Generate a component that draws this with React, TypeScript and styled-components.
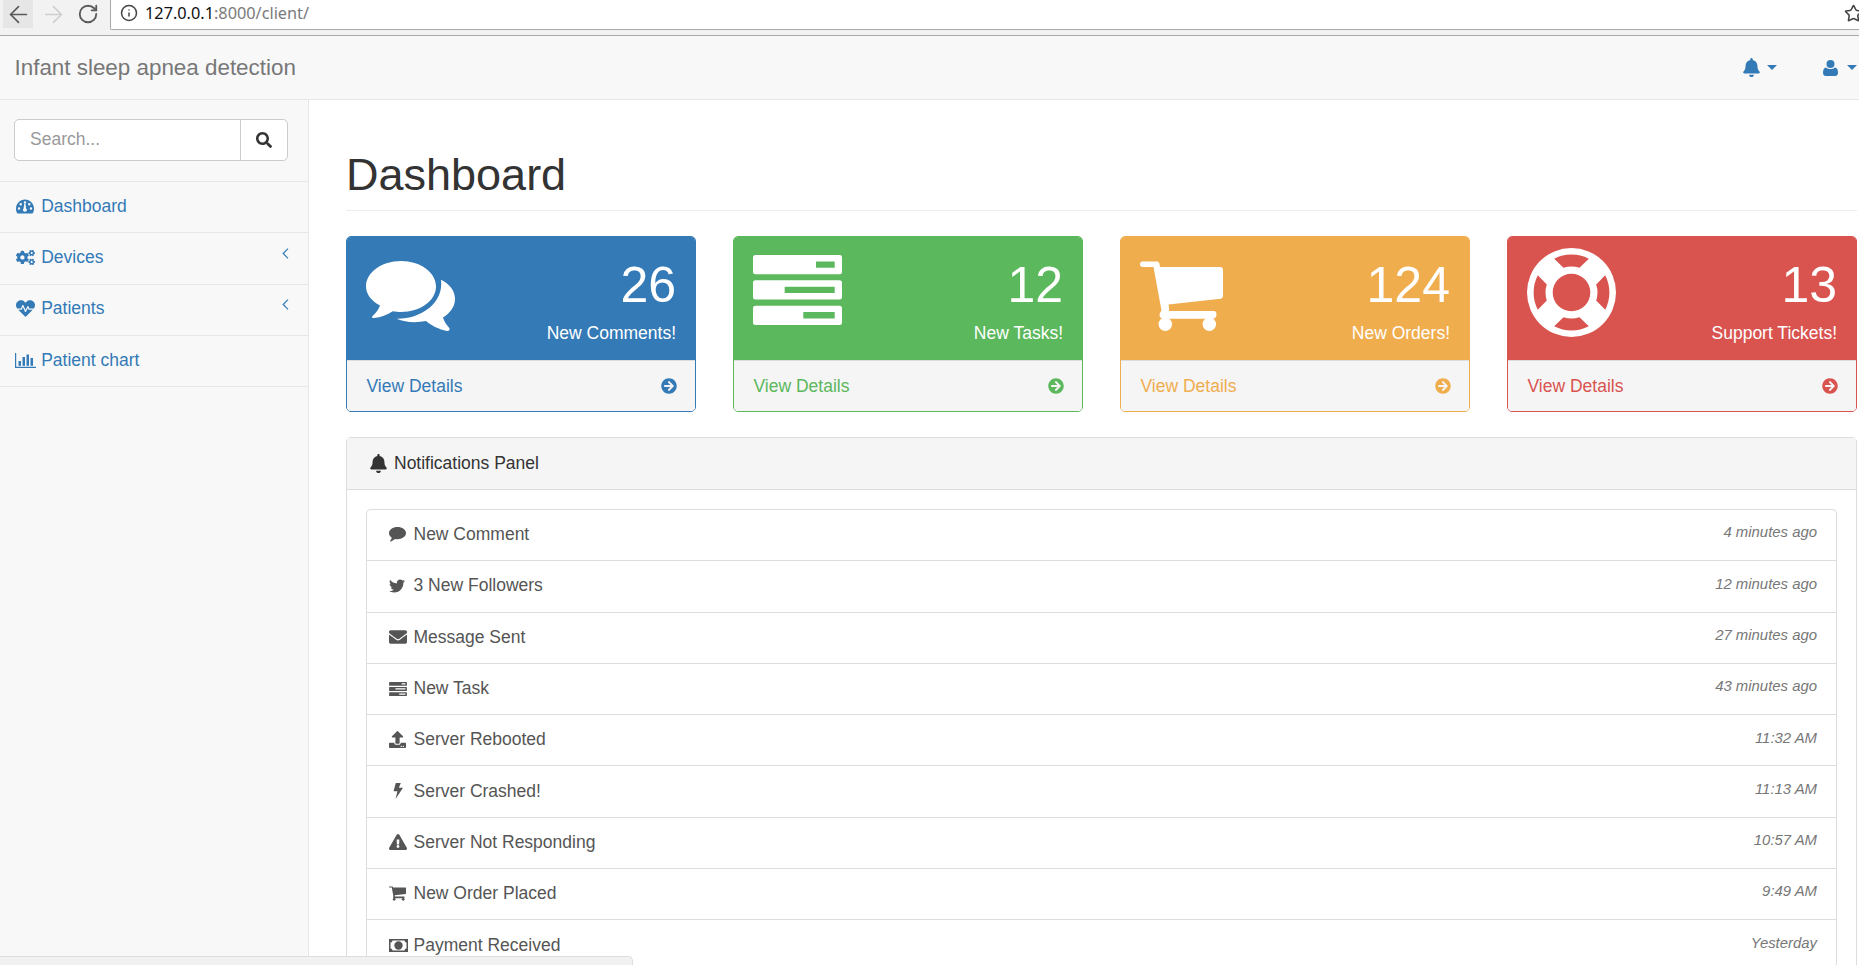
import React from "react";
import styled, { createGlobalStyle } from "styled-components";
import { ArrowLeft, ArrowRight, RotateCw, Info, Star } from "lucide-react";
import {
  FaBell, FaSearch, FaCogs, FaHeartbeat, FaArrowCircleRight,
  FaTwitter, FaEnvelope, FaUpload, FaExclamationTriangle,
} from "react-icons/fa";

const Global = createGlobalStyle`
  html, body { margin: 0; padding: 0; height: 100%; overflow: hidden; background: #fff; }
  #root { height: 100%; }
  * { box-sizing: border-box; }
  body { font-family: "Liberation Sans", Arial, sans-serif; font-size: 17.5px; color: #333; }
`;

const Page = styled.div`
  position: relative;
  width: 1859px;
  height: 965px;
  overflow: hidden;
  display: flex;
  flex-direction: column;
`;

/* browser chrome */
const BrowserBar = styled.div`
  height: 36px;
  flex: none;
  display: flex;
  background: #f2f2f2;
  border-bottom: 1px solid #a9a9a9;
  align-items: flex-start;
`;
const NavTools = styled.div`
  width: 110px;
  height: 28px;
  display: flex;
  align-items: center;
  flex: none;
  padding-left: 3px;
`;
const ToolBtn = styled.div<{ $active?: boolean; $w: number }>`
  width: ${(p) => p.$w}px;
  height: 28px;
  display: flex;
  align-items: center;
  justify-content: center;
  background: ${(p) => (p.$active ? "#e6e6e6" : "transparent")};
`;
const UrlBox = styled.div`
  flex: 1;
  height: 30px;
  background: #fff;
  border-left: 1px solid #a9a9a9;
  border-bottom: 1px solid #a9a9a9;
  border-bottom-left-radius: 2px;
  display: flex;
  align-items: center;
  padding: 0 0 3px 9px;
  gap: 7px;
  font-family: "Noto Sans", sans-serif;
  font-size: 16.3px;
  color: #7a7a7a;
`;
const UrlHost = styled.span`
  color: #111;
`;
const StarSlot = styled.span`
  margin-left: auto;
  margin-right: -4px;
  display: flex;
  color: #444;
`;

/* navbar */
const Navbar = styled.header`
  height: 64px;
  flex: none;
  background: #f8f8f8;
  border-bottom: 1px solid #e7e7e7;
  display: flex;
  align-items: center;
  justify-content: space-between;
  padding: 0 2.5px 0 14.5px;
`;
const Brand = styled.div`
  font-size: 22.4px;
  color: #777;
`;
const NavActions = styled.div`
  display: flex;
  align-items: center;
  color: #337ab7;
`;
const NavAction = styled.div<{ $left: number; $gap: number }>`
  display: flex;
  align-items: center;
  gap: ${(p) => p.$gap}px;
  margin-left: ${(p) => p.$left}px;
`;
const Caret = styled.span`
  width: 0;
  height: 0;
  border-left: 5.25px solid transparent;
  border-right: 5.25px solid transparent;
  border-top: 5.5px solid #337ab7;
`;

/* main */
const Main = styled.div`
  flex: 1;
  display: flex;
  min-height: 0;
`;
const Sidebar = styled.aside`
  width: 309px;
  flex: none;
  background: #f8f8f8;
  border-right: 1px solid #e7e7e7;
`;
const SearchRow = styled.div`
  height: 82px;
  padding: 19px 20.5px 0 14px;
  border-bottom: 1px solid #e7e7e7;
`;
const SearchGroup = styled.div`
  display: flex;
  height: 42px;
  border: 1px solid #ccc;
  border-radius: 5px;
  background: #fff;
`;
const SearchText = styled.div`
  flex: 1;
  padding-left: 15px;
  display: flex;
  align-items: center;
  color: #999;
  padding-bottom: 2px;
`;
const SearchBtn = styled.div`
  width: 47px;
  border-left: 1px solid #ccc;
  display: flex;
  align-items: center;
  justify-content: center;
  color: #333;
`;
const SideItem = styled.div`
  height: 51.3px;
  border-bottom: 1px solid #e7e7e7;
  display: flex;
  align-items: center;
  color: #337ab7;
  padding: 0 19px 1.5px 16px;
`;
const SideIcon = styled.span`
  width: 25.2px;
  flex: none;
  display: flex;
  align-items: center;
`;
const SideLabel = styled.span`
  flex: 1;
`;
const Chevron = styled.span`
  display: flex;
  margin-bottom: 9px;
`;

const Content = styled.main`
  flex: 1;
  min-width: 0;
  padding: 49.5px 2px 0 37px;
`;
const TitleBar = styled.div`
  padding-bottom: 10.5px;
  border-bottom: 1px solid #eee;
  margin-bottom: 25px;
`;
const Title = styled.h1`
  margin: 0;
  font-size: 45px;
  line-height: 50px;
  font-weight: 400;
  color: #333;
`;

const CardGrid = styled.div`
  display: grid;
  grid-template-columns: repeat(4, 350px);
  column-gap: 37px;
  margin-bottom: 25px;
`;
const Card = styled.section<{ $c: string }>`
  height: 176px;
  border: 1px solid ${(p) => p.$c};
  border-radius: 5px;
  overflow: hidden;
  display: flex;
  flex-direction: column;
`;
const CardHead = styled.div<{ $c: string }>`
  height: 123px;
  flex: none;
  background: ${(p) => p.$c};
  color: #fff;
  display: flex;
  justify-content: space-between;
  padding: 0 19px;
`;
const CardIcon = styled.div<{ $top: number }>`
  margin-top: ${(p) => p.$top}px;
  display: flex;
  align-self: flex-start;
`;
const CardNums = styled.div`
  text-align: right;
`;
const CardNum = styled.div`
  font-size: 50px;
  line-height: 55px;
  margin-top: 20.5px;
`;
const CardLabel = styled.div`
  line-height: 25px;
  margin-top: 8px;
`;
const CardFoot = styled.div<{ $c: string }>`
  flex: 1;
  background: #f5f5f5;
  border-top: 1px solid #ddd;
  color: ${(p) => p.$c};
  display: flex;
  justify-content: space-between;
  align-items: center;
  padding: 0 18.5px 0 19.5px;
`;

const Panel = styled.section`
  border: 1px solid #ddd;
  border-bottom: none;
  border-radius: 5px 5px 0 0;
`;
const PanelHead = styled.div`
  height: 52px;
  background: #f5f5f5;
  border-bottom: 1px solid #ddd;
  display: flex;
  align-items: center;
  padding: 0 0 1px 22px;
  color: #333;
`;
const PanelHeadIcon = styled.span`
  width: 25px;
  display: flex;
`;
const PanelBody = styled.div`
  padding: 19px 19.5px 0 19px;
`;
const List = styled.div`
  border: 1px solid #ddd;
  border-bottom: none;
  border-radius: 5px 5px 0 0;
`;
const Row = styled.div`
  height: 51.3px;
  border-bottom: 1px solid #ddd;
  display: flex;
  align-items: center;
  padding: 0 18.5px 1px 21.5px;
  color: #555;
`;
const RowIcon = styled.span<{ $inset?: number }>`
  width: 25px;
  flex: none;
  display: flex;
  align-items: center;
  padding-left: ${(p) => p.$inset ?? 0}px;
`;
const RowLabel = styled.span`
  flex: 1;
`;
const RowTime = styled.em`
  color: #777;
  font-size: 14.9px;
  margin-bottom: 4.5px;
`;

const BottomBar = styled.div`
  position: absolute;
  left: 0;
  bottom: 0;
  width: 633px;
  height: 9px;
  background: #f1f1f1;
  border-top: 1px solid #ddd;
  border-right: 1px solid #ddd;
  border-top-right-radius: 5px;
`;

/* drawings */
const CommentsGlyph = () => (
  <svg width="89" height="71" viewBox="0 0 89 71" fill="#fff">
    <path d="M35 0C54.3 0 70 11.4 70 25.5S54.3 51 35 51c-3 0-5.500-.3-8.200-.8C21 53.700 15 56.300 8 57c-1.500.3-2.500-.8-1.500-2C9.800 52 12.500 49 14 44.600 5.500 40 0 33.200 0 25.500 0 11.400 15.700 0 35 0Z" />
    <path d="M75 18.700C84 23 89 30 89 38c0 7.500-4.600 14-12 18.400 1 3.700 3.500 7.200 6.300 10.600 1 1.600-.2 3.300-2.300 3C73 68.500 65.500 64.500 60 60c-10 2-21 1.500-29.300-2.300C55 58 78 42 75 18.700Z" />
  </svg>
);
const bar = (y: number, hx: number) =>
  `M2.500 ${y}H86.500A2.500 2.500 0 0 1 89 ${y + 2.5}V${y + 16.8}A2.500 2.500 0 0 1 86.500 ${y + 19.3}H2.500A2.500 2.500 0 0 1 0 ${y + 16.8}V${y + 2.5}A2.500 2.500 0 0 1 2.500 ${y}Z` +
  `M${hx} ${y + 6.4}V${y + 12.7}H81.700V${y + 6.4}Z`;
const TasksGlyph = ({ w = 89, h = 70, fill = "#fff" }: { w?: number; h?: number; fill?: string }) => (
  <svg width={w} height={h} viewBox="0 0 89 70" fill={fill}>
    <path fillRule="evenodd" d={bar(0, 63) + bar(25.3, 31.7) + bar(50.7, 50.3)} />
  </svg>
);
const CartGlyph = ({ w = 83, h = 70, fill = "#fff" }: { w?: number; h?: number; fill?: string }) => (
  <svg width={w} height={h} viewBox="0 0 83 70" fill={fill}>
    <path d="M2.500.5H17c1.500 0 2.300 1 2.500 2.500l.5 3h60c2 0 3 1 3 3v26c0 1.500-1 2.500-2.500 2.700l-52 5.800.5 3.500v3h45c2 0 2.500 2 2.500 3.500 0 2.500-1.500 4.200-3.500 4.200H23c-2 0-3.500-1.700-3.500-3.700 0-2 1.500-3.500 2-4.500L13.500 6h-11C1 6 0 5 0 3.200 0 1.500 1 .5 2.500.5Z" />
    <circle cx="25.300" cy="63.300" r="6.700" />
    <circle cx="69.300" cy="63.300" r="6.700" />
  </svg>
);
const RingGlyph = () => (
  <svg width="89" height="89" viewBox="0 0 89 89" fill="#fff">
    <path
      fillRule="evenodd"
      d="M44.500 0A44.500 44.500 0 1 1 44.500 89A44.500 44.500 0 1 1 44.500 0Z
         M27.200 10.800A37.800 37.800 0 0 1 61.800 10.800L52.500 19.800A26 26 0 0 0 36.500 19.800Z
         M78.200 27.200A37.800 37.800 0 0 1 78.200 61.800L69.200 52.500A26 26 0 0 0 69.200 36.500Z
         M61.800 78.200A37.800 37.800 0 0 1 27.200 78.200L36.500 69.200A26 26 0 0 0 52.500 69.200Z
         M10.800 61.800A37.800 37.800 0 0 1 10.800 27.200L19.800 36.500A26 26 0 0 0 19.800 52.500Z
         M44.500 25.700A18.800 18.800 0 1 0 44.500 63.300A18.800 18.800 0 1 0 44.500 25.700Z"
    />
  </svg>
);
const UserGlyph = () => (
  <svg width="16" height="16" viewBox="0 0 16 16" fill="#337ab7">
    <circle cx="7.500" cy="4" r="4" />
    <path d="M3 7.500c1.200 1 2.700 1.500 4.500 1.500s3.300-.5 4.500-1.500c2 .3 3 2.300 3 5.200 0 2-1.200 3.300-3 3.300H3c-1.800 0-3-1.300-3-3.300 0-2.900 1-4.900 3-5.200Z" />
  </svg>
);
const GaugeGlyph = () => (
  <svg width="18" height="15" viewBox="0 0 19 15" fill="#337ab7">
    <path
      fillRule="evenodd"
      d="M9.500 0C14.700 0 19 4.300 19 9.500c0 2-.5 3.800-1.500 5.500H1.500C.5 13.300 0 11.500 0 9.500 0 4.300 4.300 0 9.500 0Z
         M9.500 2A1.300 1.300 0 1 0 9.500 4.600A1.300 1.300 0 1 0 9.500 2Z
         M5 3.800A1.300 1.300 0 1 0 5 6.400A1.300 1.300 0 1 0 5 3.800Z
         M14 3.800A1.300 1.300 0 1 0 14 6.400A1.300 1.300 0 1 0 14 3.800Z
         M3.200 8.300A1.300 1.300 0 1 0 3.200 10.900A1.300 1.300 0 1 0 3.200 8.300Z
         M15.800 8.300A1.300 1.300 0 1 0 15.800 10.900A1.300 1.300 0 1 0 15.800 8.300Z
         M8 9.500L8.700 4.800H10L10.700 9.500C11.300 10 11.500 10.600 11.500 11.300C11.500 12.400 10.600 13 9.400 13C8.200 13 7.300 12.400 7.300 11.300C7.300 10.600 7.500 10 8 9.500Z"
    />
  </svg>
);
const BarsGlyph = () => (
  <svg width="21" height="15" viewBox="0 0 21 15" fill="#337ab7" style={{ marginLeft: -1 }}>
    <path d="M0 0h1.200v13.800H21V15H0Z" />
    <rect x="3.500" y="8" width="2.500" height="4.800" />
    <rect x="7.500" y="4" width="2.500" height="8.800" />
    <rect x="11.500" y="1.500" width="2.500" height="11.300" />
    <rect x="15.500" y="5" width="2.500" height="7.800" />
  </svg>
);
const ChevronGlyph = () => (
  <svg width="7" height="11" viewBox="0 0 7 11" fill="none" stroke="#337ab7" strokeWidth="1.200">
    <path d="M6 .7 1.200 5.500 6 10.300" />
  </svg>
);
const CommentGlyph = () => (
  <svg width="17" height="15" viewBox="0 0 17 15" fill="#555">
    <path d="M8.500 0C13.200 0 17 2.700 17 6.100s-3.800 6.100-8.500 6.100c-.9 0-1.700-.1-2.500-.2C4.700 13.200 3 14.200 1.300 14.600c-.4.100-.6-.2-.4-.5.700-.8 1.500-1.700 1.900-3.300C1.100 9.700 0 8 0 6.100 0 2.700 3.800 0 8.500 0Z" />
  </svg>
);
const BoltGlyph = () => (
  <svg width="10" height="16" viewBox="0 0 9 17" fill="#555" preserveAspectRatio="none">
    <path d="M2.500 0H7L5.300 5H9L2.300 17 4 8.800H.5Z" />
  </svg>
);
const MoneyGlyph = () => (
  <svg width="19" height="13" viewBox="0 0 19 13" fill="#555">
    <path
      fillRule="evenodd"
      d="M0 0H19V13H0Z
         M3.500 1.500A2 2 0 0 1 1.500 3.500V9.500A2 2 0 0 1 3.500 11.500H15.500A2 2 0 0 1 17.500 9.500V3.500A2 2 0 0 1 15.500 1.500Z
         M9.500 2.300A4.200 4.200 0 1 1 9.500 10.700A4.200 4.200 0 1 1 9.500 2.300Z"
    />
    <path d="M8.300 4.300h1.900v3.900h1v1H8v-1h1V5.500h-.7Z" />
  </svg>
);

const cards = [
  { c: "#337ab7", n: "26", l: "New Comments!", top: 24, icon: <CommentsGlyph /> },
  { c: "#5cb85c", n: "12", l: "New Tasks!", top: 18, icon: <TasksGlyph /> },
  { c: "#f0ad4e", n: "124", l: "New Orders!", top: 24, icon: <CartGlyph /> },
  { c: "#d9534f", n: "13", l: "Support Tickets!", top: 11, icon: <RingGlyph /> },
];

const rows = [
  { i: <CommentGlyph />, t: "New Comment", w: "4 minutes ago" },
  { i: <FaTwitter size={16} color="#555" />, t: "3 New Followers", w: "12 minutes ago" },
  { i: <FaEnvelope size={18} color="#555" />, t: "Message Sent", w: "27 minutes ago" },
  { i: <TasksGlyph w={18} h={14} fill="#555" />, t: "New Task", w: "43 minutes ago" },
  { i: <FaUpload size={17} color="#555" />, t: "Server Rebooted", w: "11:32 AM" },
  { i: <BoltGlyph />, t: "Server Crashed!", w: "11:13 AM", inset: 4 },
  { i: <FaExclamationTriangle size={18} color="#555" />, t: "Server Not Responding", w: "10:57 AM" },
  { i: <CartGlyph w={17} h={15} fill="#555" />, t: "New Order Placed", w: "9:49 AM" },
  { i: <MoneyGlyph />, t: "Payment Received", w: "Yesterday" },
];

export default function App() {
  return (
    <Page>
      <Global />
      <BrowserBar>
        <NavTools>
          <ToolBtn $active $w={30}>
            <ArrowLeft size={27} color="#5a5a5a" strokeWidth={1.5} />
          </ToolBtn>
          <ToolBtn $w={40}>
            <ArrowRight size={27} color="#cfcfcf" strokeWidth={1.5} />
          </ToolBtn>
          <ToolBtn $w={30}>
            <RotateCw size={22} color="#5a5a5a" strokeWidth={2} />
          </ToolBtn>
        </NavTools>
        <UrlBox>
          <Info size={18} color="#444" strokeWidth={2} />
          <span>
            <UrlHost>127.0.0.1</UrlHost>:8000/client/
          </span>
          <StarSlot>
            <Star size={19} strokeWidth={2} />
          </StarSlot>
        </UrlBox>
      </BrowserBar>
      <Navbar>
        <Brand>Infant sleep apnea detection</Brand>
        <NavActions>
          <NavAction $left={0} $gap={6}>
            <FaBell size={19} />
            <Caret />
          </NavAction>
          <NavAction $left={46.5} $gap={7.5}>
            <UserGlyph />
            <Caret />
          </NavAction>
        </NavActions>
      </Navbar>
      <Main>
        <Sidebar>
          <SearchRow>
            <SearchGroup>
              <SearchText>Search...</SearchText>
              <SearchBtn>
                <FaSearch size={16} />
              </SearchBtn>
            </SearchGroup>
          </SearchRow>
          <SideItem>
            <SideIcon><GaugeGlyph /></SideIcon>
            <SideLabel>Dashboard</SideLabel>
          </SideItem>
          <SideItem>
            <SideIcon><FaCogs size={19} /></SideIcon>
            <SideLabel>Devices</SideLabel>
            <Chevron><ChevronGlyph /></Chevron>
          </SideItem>
          <SideItem>
            <SideIcon><FaHeartbeat size={19} /></SideIcon>
            <SideLabel>Patients</SideLabel>
            <Chevron><ChevronGlyph /></Chevron>
          </SideItem>
          <SideItem>
            <SideIcon><BarsGlyph /></SideIcon>
            <SideLabel>Patient chart</SideLabel>
          </SideItem>
        </Sidebar>
        <Content>
          <TitleBar>
            <Title>Dashboard</Title>
          </TitleBar>
          <CardGrid>
            {cards.map((k) => (
              <Card key={k.l} $c={k.c}>
                <CardHead $c={k.c}>
                  <CardIcon $top={k.top}>{k.icon}</CardIcon>
                  <CardNums>
                    <CardNum>{k.n}</CardNum>
                    <CardLabel>{k.l}</CardLabel>
                  </CardNums>
                </CardHead>
                <CardFoot $c={k.c}>
                  <span>View Details</span>
                  <FaArrowCircleRight size={16} />
                </CardFoot>
              </Card>
            ))}
          </CardGrid>
          <Panel>
            <PanelHead>
              <PanelHeadIcon><FaBell size={19} /></PanelHeadIcon>
              Notifications Panel
            </PanelHead>
            <PanelBody>
              <List>
                {rows.map((r) => (
                  <Row key={r.t}>
                    <RowIcon $inset={r.inset}>{r.i}</RowIcon>
                    <RowLabel>{r.t}</RowLabel>
                    <RowTime>{r.w}</RowTime>
                  </Row>
                ))}
              </List>
            </PanelBody>
          </Panel>
        </Content>
      </Main>
      <BottomBar />
    </Page>
  );
}
